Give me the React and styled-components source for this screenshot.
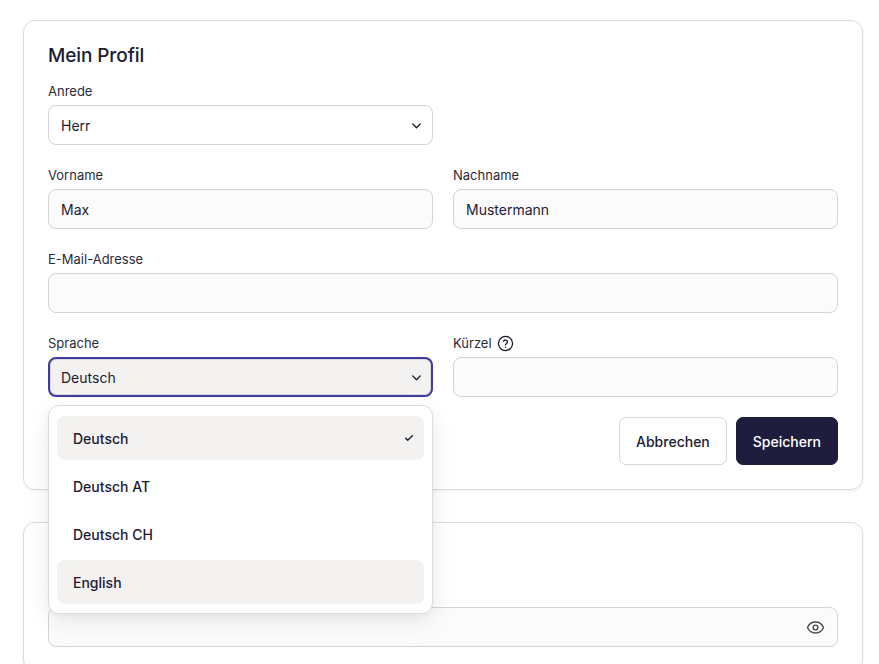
import React from "react";
import styled, { createGlobalStyle } from "styled-components";

const Global = createGlobalStyle`
  html, body { margin: 0; padding: 0; background: #ffffff; }
  body { font-family: Inter, "Noto Sans", sans-serif; color: #1c1b33; -webkit-font-smoothing: antialiased; }
  * { box-sizing: border-box; }
`;

const Page = styled.div`
  padding: 20px 16px 0 23px;
  display: flex;
  flex-direction: column;
  gap: 32px;
  height: 664px;
  overflow: hidden;
`;

const Card = styled.section`
  border: 1px solid #dcdcdc;
  border-radius: 12px;
  background: #fff;
  padding: 24px;
  box-shadow: 0 1px 3px rgba(0, 0, 0, 0.06);
  display: flex;
  flex-direction: column;
  flex-shrink: 0;
`;

const Title = styled.h2`
  margin: 0 0 14px;
  font-size: 19px;
  line-height: 22px;
  font-weight: 500;
  color: #1c1b33;
  letter-spacing: -0.1px;
`;

const Grid = styled.div`
  display: grid;
  grid-template-columns: 1fr 1fr;
  column-gap: 20px;
  row-gap: 20px;
`;

const Field = styled.div`
  display: flex;
  flex-direction: column;
  gap: 4px;
  grid-column: ${(p) => (p.$full ? "1 / -1" : "auto")};
  position: relative;
`;

const Label = styled.label`
  display: flex;
  align-items: center;
  gap: 5px;
  font-size: 13px;
  line-height: 20px;
  color: #2a2a35;
`;

const Input = styled.div`
  height: 40px;
  border: 1px solid #d4d4d4;
  border-radius: 8px;
  background: #fbfbfb;
  display: flex;
  align-items: center;
  justify-content: space-between;
  padding: 0 12px;
  font-size: 14px;
  color: #1c1b33;
`;

const Select = styled(Input)`
  background: ${(p) => (p.$open ? "#f3f2f1" : "#ffffff")};
  border: ${(p) => (p.$open ? "2px solid #403b9c" : "1px solid #d4d4d4")};
  padding: ${(p) => (p.$open ? "0 8px 0 11px" : "0 9px 0 12px")};
  box-shadow: ${(p) => (p.$open ? "inset 0 0 0 1px #d9d8e0" : "none")};
`;

const Actions = styled.div`
  display: flex;
  justify-content: flex-end;
  gap: 9px;
  margin-top: 20px;
`;

const Button = styled.button`
  height: 48px;
  padding: 0 16px;
  border-radius: 7px;
  font-family: inherit;
  font-size: 14px;
  font-weight: 500;
  border: 1px solid ${(p) => (p.$primary ? "#1f1d3d" : "#d6d6d6")};
  background: ${(p) => (p.$primary ? "#1f1d3d" : "#ffffff")};
  color: ${(p) => (p.$primary ? "#ffffff" : "#1c1b33")};
`;

const Popover = styled.div`
  position: absolute;
  top: 72px;
  left: 0;
  right: 0;
  z-index: 10;
  background: #fff;
  border: 1px solid #dcdcdc;
  border-radius: 11px;
  padding: 10px 8px 9px;
  display: flex;
  flex-direction: column;
  gap: 4px;
  box-shadow: 0 8px 24px rgba(0, 0, 0, 0.08), 0 2px 6px rgba(0, 0, 0, 0.04);
`;

const Option = styled.div`
  height: 44px;
  border-radius: 8px;
  padding: 0 10px 0 16px;
  display: flex;
  align-items: center;
  justify-content: space-between;
  font-size: 14px;
  font-weight: 500;
  color: #1c1b33;
  background: ${(p) => (p.$highlight ? "#f3f2f1" : "transparent")};
`;

const Chevron = () => (
  <svg width="13" height="13" viewBox="0 0 24 24" fill="none" stroke="#1c1b33" strokeWidth="2.6" strokeLinecap="round" strokeLinejoin="round">
    <path d="M5 9l7 7 7-7" />
  </svg>
);

const Check = () => (
  <svg width="10" height="10" viewBox="0 0 24 24" fill="none" stroke="#1c1b33" strokeWidth="3.4" strokeLinecap="round" strokeLinejoin="round">
    <path d="M4 12.5l5 5L20 6.5" />
  </svg>
);

const Help = () => (
  <svg width="17" height="17" viewBox="0 0 24 24" fill="none" stroke="#1c1b33" strokeWidth="1.8" strokeLinecap="round" strokeLinejoin="round">
    <circle cx="12" cy="12" r="10" />
    <path d="M9.1 9a3 3 0 0 1 5.8 1c0 2-3 2.6-3 4" />
    <path d="M12 17.2h.01" />
  </svg>
);

const Eye = () => (
  <svg width="19" height="19" viewBox="0 0 24 24" fill="none" stroke="#4a4a55" strokeWidth="1.8" strokeLinecap="round" strokeLinejoin="round">
    <path d="M2.06 12.35a1 1 0 0 1 0-.7 10.75 10.75 0 0 1 19.88 0 1 1 0 0 1 0 .7 10.75 10.75 0 0 1-19.88 0" />
    <circle cx="12" cy="12" r="3" />
  </svg>
);

const options = ["Deutsch", "Deutsch AT", "Deutsch CH", "English"];

export default function App() {
  return (
    <>
      <Global />
      <Page>
        <Card>
          <Title>Mein Profil</Title>
          <Grid>
            <Field>
              <Label>Anrede</Label>
              <Select>
                Herr
                <Chevron />
              </Select>
            </Field>
            <div />
            <Field>
              <Label>Vorname</Label>
              <Input>Max</Input>
            </Field>
            <Field>
              <Label>Nachname</Label>
              <Input>Mustermann</Input>
            </Field>
            <Field $full>
              <Label>E-Mail-Adresse</Label>
              <Input />
            </Field>
            <Field>
              <Label>Sprache</Label>
              <Select $open>
                Deutsch
                <Chevron />
              </Select>
              <Popover>
                {options.map((o, i) => (
                  <Option key={o} $highlight={i === 0 || i === 3}>
                    {o}
                    {i === 0 && <Check />}
                  </Option>
                ))}
              </Popover>
            </Field>
            <Field>
              <Label>
                Kürzel <Help />
              </Label>
              <Input />
            </Field>
          </Grid>
          <Actions>
            <Button>Abbrechen</Button>
            <Button $primary>Speichern</Button>
          </Actions>
        </Card>
        <Card>
          <Title>Passwort ändern</Title>
          <Field>
            <Label>Aktuelles Passwort</Label>
            <Input>
              <span />
              <Eye />
            </Input>
          </Field>
        </Card>
      </Page>
    </>
  );
}
